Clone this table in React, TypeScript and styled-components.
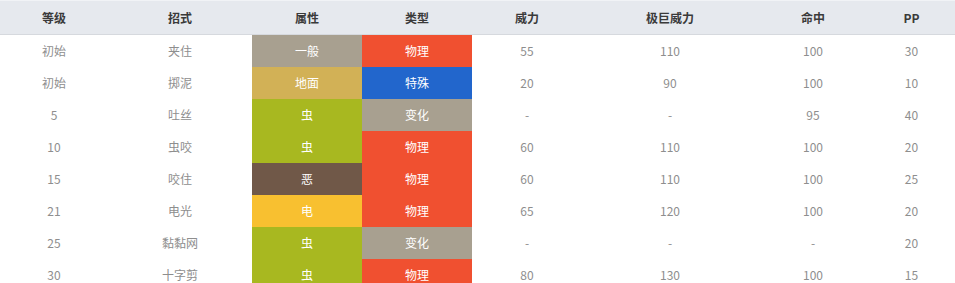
import styled, { createGlobalStyle } from "styled-components";

type Move = {
  level: string;
  name: string;
  type: string;
  category: string;
  power: string;
  maxPower: string;
  accuracy: string;
  pp: string;
};

const typeColors: Record<string, string> = {
  一般: "#a8a090",
  地面: "#d2b156",
  虫: "#a8b820",
  恶: "#705848",
  电: "#f8c030",
};

const categoryColors: Record<string, string> = {
  物理: "#f05030",
  特殊: "#2266cc",
  变化: "#a8a090",
};

const moves: Move[] = [
  { level: "初始", name: "夹住", type: "一般", category: "物理", power: "55", maxPower: "110", accuracy: "100", pp: "30" },
  { level: "初始", name: "掷泥", type: "地面", category: "特殊", power: "20", maxPower: "90", accuracy: "100", pp: "10" },
  { level: "5", name: "吐丝", type: "虫", category: "变化", power: "-", maxPower: "-", accuracy: "95", pp: "40" },
  { level: "10", name: "虫咬", type: "虫", category: "物理", power: "60", maxPower: "110", accuracy: "100", pp: "20" },
  { level: "15", name: "咬住", type: "恶", category: "物理", power: "60", maxPower: "110", accuracy: "100", pp: "25" },
  { level: "21", name: "电光", type: "电", category: "物理", power: "65", maxPower: "120", accuracy: "100", pp: "20" },
  { level: "25", name: "黏黏网", type: "虫", category: "变化", power: "-", maxPower: "-", accuracy: "-", pp: "20" },
  { level: "30", name: "十字剪", type: "虫", category: "物理", power: "80", maxPower: "130", accuracy: "100", pp: "15" },
];

const GlobalStyle = createGlobalStyle`
  body {
    margin: 0;
    background: #fff;
    font-family: "Noto Sans CJK SC", "Noto Sans", sans-serif;
  }
`;

const Table = styled.table`
  width: 955px;
  border-collapse: collapse;
  table-layout: fixed;
  font-size: 12px;
`;

const HeadRow = styled.tr`
  height: 34px;
  background: #e6e9ee;
  border-top: 1px solid #f1f3f6;
  border-bottom: 1px solid #d6d9de;
`;

const Th = styled.th`
  padding: 0;
  font-weight: 700;
  color: #3a3a3a;
  text-align: center;
`;

const Row = styled.tr`
  height: 32px;
`;

const Cell = styled.td`
  padding: 0;
  text-align: center;
  color: #8e8e8e;
`;

const Badge = styled.td<{ $bg: string }>`
  padding: 0;
  text-align: center;
  color: #fff;
  background: ${(p) => p.$bg};
`;

const columns = [
  { title: "等级", width: 108 },
  { title: "招式", width: 144 },
  { title: "属性", width: 110 },
  { title: "类型", width: 110 },
  { title: "威力", width: 110 },
  { title: "极巨威力", width: 176 },
  { title: "命中", width: 110 },
  { title: "PP", width: 87 },
];

export default function App() {
  return (
    <>
      <GlobalStyle />
      <Table>
        <colgroup>
          {columns.map((c) => (
            <col key={c.title} style={{ width: c.width }} />
          ))}
        </colgroup>
        <thead>
          <HeadRow>
            {columns.map((c) => (
              <Th key={c.title}>{c.title}</Th>
            ))}
          </HeadRow>
        </thead>
        <tbody>
          {moves.map((m, i) => (
            <Row key={i}>
              <Cell>{m.level}</Cell>
              <Cell>{m.name}</Cell>
              <Badge $bg={typeColors[m.type]}>{m.type}</Badge>
              <Badge $bg={categoryColors[m.category]}>{m.category}</Badge>
              <Cell>{m.power}</Cell>
              <Cell>{m.maxPower}</Cell>
              <Cell>{m.accuracy}</Cell>
              <Cell>{m.pp}</Cell>
            </Row>
          ))}
        </tbody>
      </Table>
    </>
  );
}
